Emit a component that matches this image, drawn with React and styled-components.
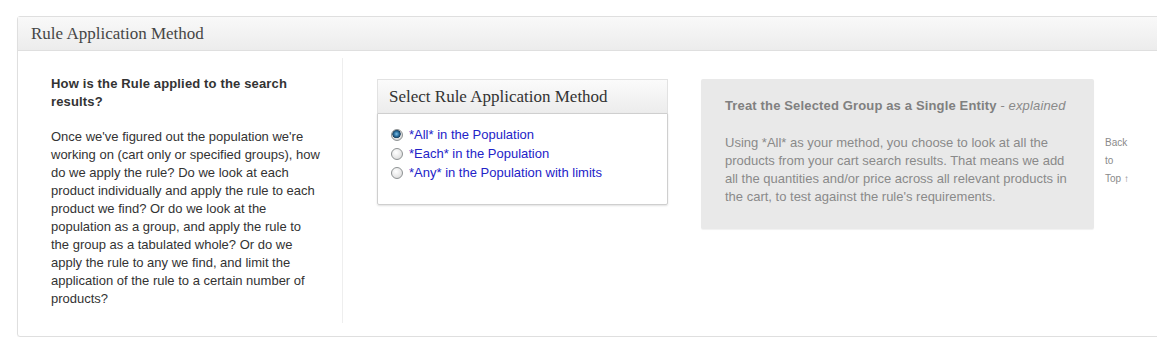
import styled, { createGlobalStyle } from "styled-components";

const GlobalStyle = createGlobalStyle`
  body {
    margin: 0;
    background: #fff;
    overflow: hidden;
    font-family: "Liberation Sans", Arial, sans-serif;
  }
`;

const Page = styled.div`
  padding: 16px 0 0 17px;
`;

const Panel = styled.div`
  width: 1160px;
  border: 1px solid #dfdfdf;
  border-radius: 3px 0 0 3px;
  box-shadow: 0 1px 1px rgba(0, 0, 0, 0.04);
`;

const PanelHeader = styled.div`
  height: 33px;
  line-height: 34px;
  padding-left: 13px;
  border-bottom: 1px solid #dfdfdf;
  background: linear-gradient(to bottom, #f9f9f9, #ececec);
  font-family: "Liberation Serif", Georgia, serif;
  font-size: 17px;
  color: #464646;
`;

const PanelBody = styled.div`
  display: flex;
  align-items: flex-start;
  padding: 7px 0 13px;
`;

const InfoColumn = styled.div`
  width: 270px;
  padding: 17px 21px 15px 33px;
  border-right: 1px solid #eeeeee;
  font-size: 13px;
  line-height: 18px;
  color: #333;
`;

const InfoTitle = styled.div`
  font-weight: bold;
  margin-bottom: 17px;
  letter-spacing: 0.15px;
`;

const SelectBox = styled.div`
  width: 291px;
  margin: 21px 0 0 34px;
`;

const SelectHeader = styled.div`
  height: 33px;
  line-height: 34px;
  padding-left: 11px;
  border: 1px solid #e2e2e2;
  border-bottom: none;
  background: linear-gradient(to bottom, #fbfbfb, #ececec);
  font-family: "Liberation Serif", Georgia, serif;
  font-size: 17px;
  color: #333;
`;

const SelectBody = styled.div`
  height: 74px;
  padding: 11px 0 5px 13px;
  border: 1px solid #cfcfcf;
  border-radius: 0 0 2px 2px;
  box-shadow: 0 1px 2px rgba(0, 0, 0, 0.12);
  display: flex;
  flex-direction: column;
`;

const Option = styled.label`
  display: flex;
  align-items: center;
  gap: 6px;
  height: 19px;
  font-size: 13px;
  color: #2323c8;
`;

const Radio = styled.input`
  appearance: none;
  margin: 0;
  width: 12px;
  height: 12px;
  border-radius: 50%;
  border: 1px solid #8e9293;
  background: radial-gradient(circle at 40% 35%, #ffffff 0%, #e6e6e6 60%, #cfcfcf 100%);
  flex-shrink: 0;

  &:checked {
    background: radial-gradient(circle at 45% 40%, #7fc0e8 0%, #2a6f9e 30%, #1b3f5e 48%, #e2e2e2 55%, #d0d0d0 100%);
  }
`;

const ExplainBox = styled.div`
  width: 345px;
  height: 114px;
  margin: 21px 0 0 33px;
  padding: 18px 24px;
  background: #e9e9e9;
  border-radius: 2px;
  box-shadow: 0 1px 1px rgba(0, 0, 0, 0.06);
  font-size: 13px;
  line-height: 18px;
  color: #8a8a8a;
`;

const ExplainTitle = styled.div`
  font-weight: bold;
  color: #808080;
  margin-bottom: 19px;
  letter-spacing: 0.15px;

  em {
    font-weight: normal;
    font-style: italic;
    color: #8a8a8a;
  }
`;

const BackToTop = styled.a`
  width: 25px;
  margin: 76px 0 0 11px;
  font-size: 10px;
  line-height: 18px;
  color: #8a8a8a;
  text-decoration: none;
`;

const NoWrap = styled.span`
  white-space: nowrap;
`;

const options = [
  { id: "all", label: "*All* in the Population" },
  { id: "each", label: "*Each* in the Population" },
  { id: "any", label: "*Any* in the Population with limits" },
];

const App = () => {
  return (
    <>
      <GlobalStyle />
      <Page>
        <Panel>
          <PanelHeader>Rule Application Method</PanelHeader>
          <PanelBody>
            <InfoColumn>
              <InfoTitle>How is the Rule applied to the search results?</InfoTitle>
              Once we've figured out the population we're working on (cart
              only or specified groups), how do we apply the rule? Do we look
              at each product individually and apply the rule to each product
              we find? Or do we look at the population as a group, and apply
              the rule to the group as a tabulated whole? Or do we apply the
              rule to any we find, and limit the application of the rule to a
              certain number of products?
            </InfoColumn>
            <SelectBox>
              <SelectHeader>Select Rule Application Method</SelectHeader>
              <SelectBody>
                {options.map((opt) => (
                  <Option key={opt.id}>
                    <Radio
                      type="radio"
                      name="method"
                      defaultChecked={opt.id === "all"}
                    />
                    {opt.label}
                  </Option>
                ))}
              </SelectBody>
            </SelectBox>
            <ExplainBox>
              <ExplainTitle>
                Treat the Selected Group as a Single Entity <em>- explained</em>
              </ExplainTitle>
              Using *All* as your method, you choose to look at all the
              products from your cart search results. That means we add all
              the quantities and/or price across all relevant products in the
              cart, to test against the rule's requirements.
            </ExplainBox>
            <BackToTop href="#">
              Back to <NoWrap>Top ↑</NoWrap>
            </BackToTop>
          </PanelBody>
        </Panel>
      </Page>
    </>
  );
};

export default App;
